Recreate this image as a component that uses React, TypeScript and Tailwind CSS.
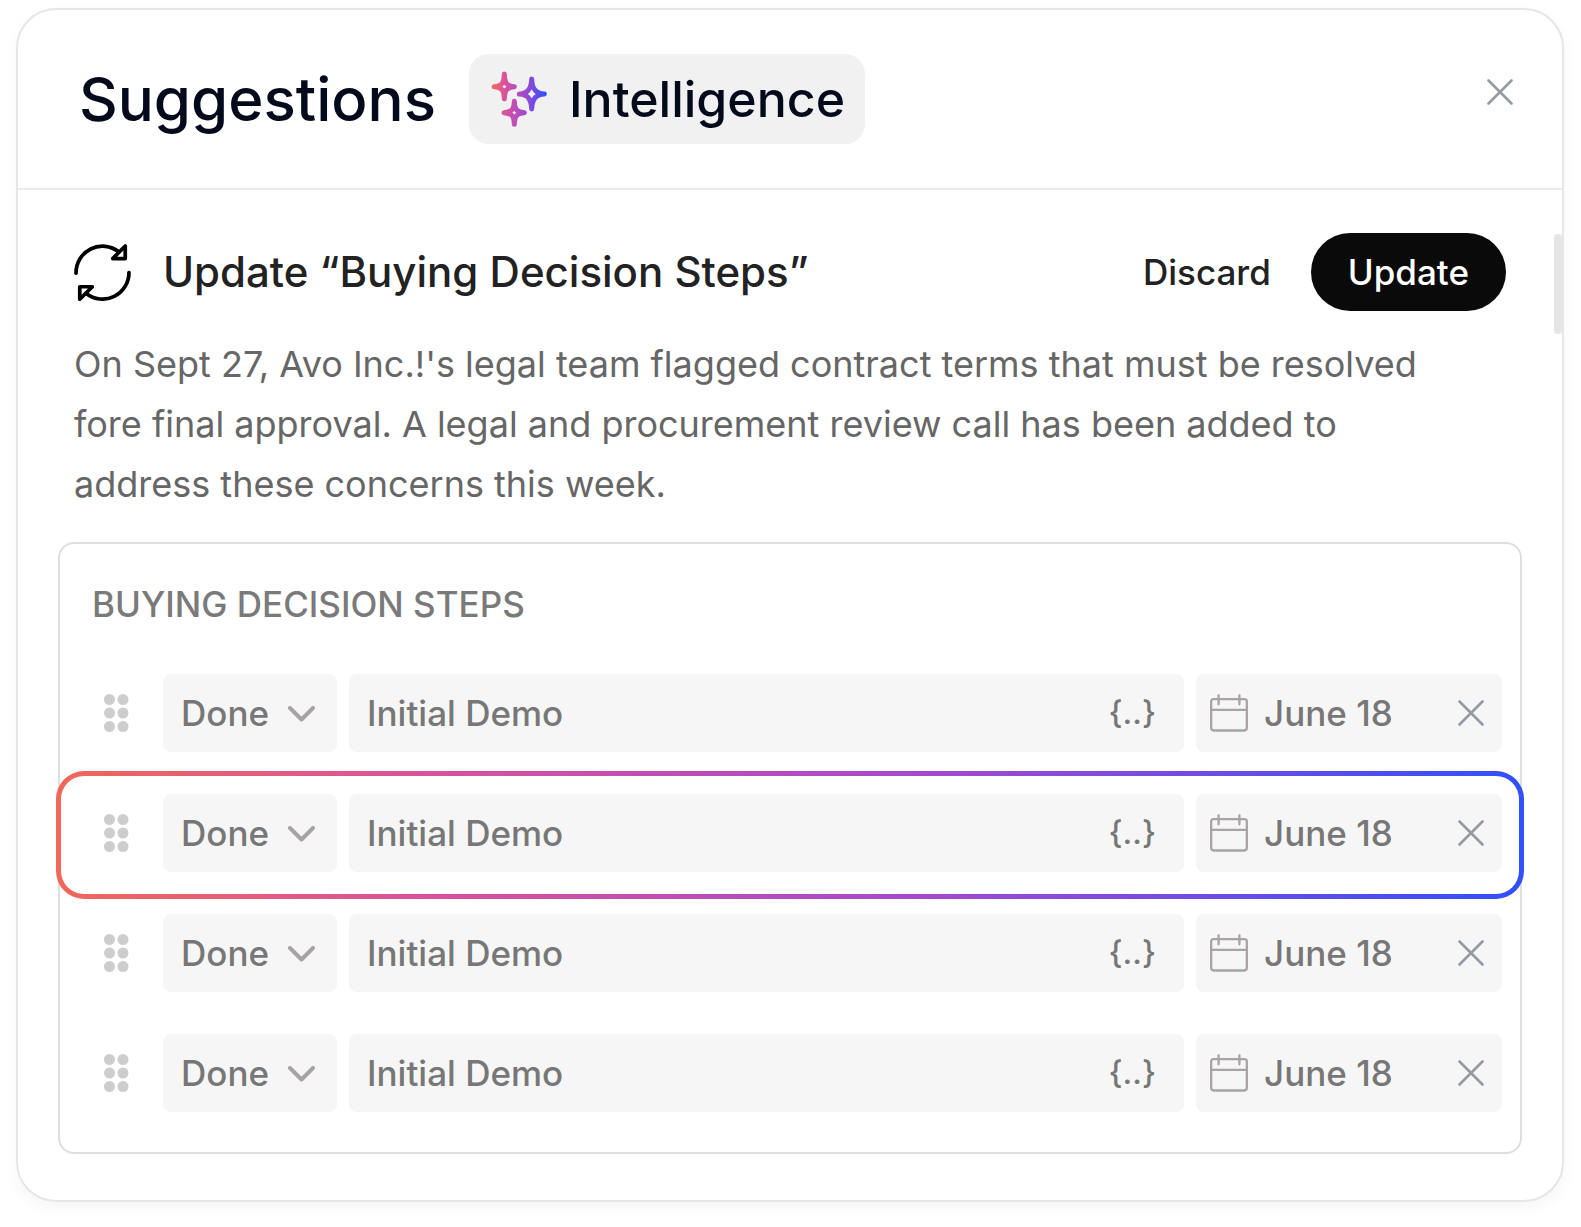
import React, { useState } from 'react';

interface Step {
  id: number;
  status: string;
  name: string;
  date: string;
  highlighted?: boolean;
}

const initialSteps: Step[] = [
  { id: 1, status: 'Done', name: 'Initial Demo', date: 'June 18' },
  { id: 2, status: 'Done', name: 'Initial Demo', date: 'June 18', highlighted: true },
  { id: 3, status: 'Done', name: 'Initial Demo', date: 'June 18' },
  { id: 4, status: 'Done', name: 'Initial Demo', date: 'June 18' },
];

const SparklesIcon = ({ className }: { className?: string }) => (
  <svg viewBox="0 0 168 168" fill="none" className={className} aria-hidden="true">
    <defs>
      <linearGradient id="sparkles" gradientUnits="userSpaceOnUse" x1="0" y1="60" x2="168" y2="60">
        <stop offset="0" stopColor="#f56b52" />
        <stop offset="0.25" stopColor="#d9529d" />
        <stop offset="0.6" stopColor="#a349cf" />
        <stop offset="1" stopColor="#2d50fb" />
      </linearGradient>
    </defs>
    <g stroke="url(#sparkles)" strokeWidth="15" strokeLinejoin="round">
      <path d="M40 9C41 36 46 45 70 47C46 49 41 58 40 84C39 58 34 49 9 47C34 45 39 36 40 9Z" />
      <path d="M122 24C123 52 133 68 160 69C133 70 123 86 122 114C121 86 111 70 85 69C111 68 121 52 122 24Z" />
      <path d="M70 91C71 114 76 123 100 125C76 127 71 136 70 160C69 136 64 127 39 125C64 123 69 114 70 91Z" />
    </g>
  </svg>
);

const RefreshIcon = ({ className }: { className?: string }) => (
  <svg viewBox="0 0 168 168" fill="none" stroke="currentColor" strokeWidth="11" strokeLinecap="round" strokeLinejoin="round" className={className} aria-hidden="true">
    <path d="M6 86A78 78 0 0 1 132 23" />
    <path d="M151 6V43H114Z" />
    <path d="M162 84A78 78 0 0 1 36 146" />
    <path d="M17 163V126H54Z" />
  </svg>
);

const CloseIcon = ({ className }: { className?: string }) => (
  <svg viewBox="0 0 26 26" fill="none" stroke="currentColor" strokeWidth="2.6" strokeLinecap="round" className={className} aria-hidden="true">
    <path d="M1.5 1.5L24.5 24.5M24.5 1.5L1.5 24.5" />
  </svg>
);

const CalendarIcon = ({ className }: { className?: string }) => (
  <svg viewBox="0 0 115 115" fill="none" stroke="currentColor" strokeWidth="7" strokeLinecap="round" className={className} aria-hidden="true">
    <rect x="3.5" y="15.5" width="108" height="95" rx="8" />
    <path d="M4 48H111" />
    <path d="M26 4V31M89 4V31" />
  </svg>
);

const ChevronIcon = ({ className }: { className?: string }) => (
  <svg viewBox="0 0 27 16" fill="none" stroke="currentColor" strokeWidth="4" strokeLinecap="round" strokeLinejoin="round" className={className} aria-hidden="true">
    <path d="M2 2L13.5 13.5L25 2" />
  </svg>
);

const GripIcon = ({ className }: { className?: string }) => (
  <svg viewBox="0 0 25 38" fill="currentColor" className={className} aria-hidden="true">
    {[5.5, 19].map((cx) =>
      [5.5, 19, 32.5].map((cy) => <circle key={`${cx}-${cy}`} cx={cx} cy={cy} r="5.5" />)
    )}
  </svg>
);

interface StepRowProps {
  step: Step;
  onChange: (step: Step) => void;
}

const StepRow: React.FC<StepRowProps> = ({ step, onChange }) => {
  return (
    <li className="relative flex items-center pl-11 pr-[18px] text-[35px] font-medium text-[#777777]">
      {step.highlighted && (
        <div className="pointer-events-none absolute -inset-x-1 -top-[23px] -bottom-[27px] rounded-[28px] border-5 border-transparent [background:linear-gradient(#fff,#fff)_padding-box,linear-gradient(90deg,#f06858,#d9529d_25%,#a349cf_60%,#3050fb)_border-box]" />
      )}
      <button type="button" aria-label="Reorder step" className="relative mr-[34px] shrink-0 text-[#cdcdcd]">
        <GripIcon className="h-[38px] w-[25px]" />
      </button>
      <div className="relative flex min-w-0 flex-1 gap-3">
        <div className="relative w-[174px] shrink-0">
          <select
            aria-label="Status"
            value={step.status}
            onChange={(e) => onChange({ ...step, status: e.target.value })}
            className="h-[78px] w-full appearance-none rounded-lg bg-[#f6f6f6] pl-[18px]"
          >
            <option value="Done">Done</option>
            <option value="Next">Next</option>
          </select>
          <ChevronIcon className="pointer-events-none absolute top-8 right-[22px] w-[27px] text-[#a8a4a4]" />
        </div>
        <div className="flex h-[78px] min-w-0 flex-1 items-center rounded-lg bg-[#f6f6f6] pl-[18px] pr-7">
          <input
            type="text"
            aria-label="Step name"
            value={step.name}
            onChange={(e) => onChange({ ...step, name: e.target.value })}
            className="min-w-0 flex-1 bg-transparent outline-none"
          />
          <button type="button" aria-label="Insert variable" className="text-[32px]">{'{..}'}</button>
        </div>
        <div className="flex h-[78px] w-[306px] shrink-0 items-center rounded-lg bg-[#f6f6f6] pl-[14px] pr-[18px]">
          <CalendarIcon className="size-[38px] shrink-0 text-[#a8a4a4]" />
          <input
            type="text"
            aria-label="Date"
            value={step.date}
            onChange={(e) => onChange({ ...step, date: e.target.value })}
            className="ml-4 min-w-0 flex-1 bg-transparent outline-none"
          />
          <button type="button" aria-label="Remove step" className="shrink-0 text-[#949aa1]">
            <CloseIcon className="size-[26px]" />
          </button>
        </div>
      </div>
    </li>
  );
};

export default function App() {
  const [steps, setSteps] = useState<Step[]>(initialSteps);

  const updateStep = (next: Step) => {
    setSteps(steps.map((step) => (step.id === next.id ? next : step)));
  };

  return (
    <div className="bg-white pt-2 pr-[17px] pb-6 pl-4 font-[Inter,sans-serif]">
      <div className="relative rounded-[40px] border-2 border-[#e6e6e6] bg-white shadow-[0_6px_16px_rgba(0,0,0,0.04)]">
        <header className="flex items-center border-b-2 border-[#ebebeb] py-11 pr-6 pl-[61px]">
          <h1 className="text-[60px] leading-[72px] font-medium text-[#020a1c]">Suggestions</h1>
          <div className="ml-[33px] flex h-[90px] items-center gap-[22px] rounded-[20px] bg-[#f1f1f1] pr-5 pl-[22px]">
            <SparklesIcon className="size-14" />
            <span className="text-[50px] leading-[60px] font-medium text-[#020a1c]">Intelligence</span>
          </div>
          <button type="button" aria-label="Close" className="ml-auto flex size-[76px] items-center justify-center self-start text-[#969ba3]">
            <CloseIcon className="size-[26px]" />
          </button>
        </header>

        {/* scroll thumb */}
        <div className="absolute top-[224px] right-0 h-[100px] w-2 rounded-full bg-[#e6e6e6]" />

        <main className="px-10 pt-[43px] pb-[46px]">
          <section className="px-4">
            <div className="flex items-center">
              <RefreshIcon className="size-[57px] shrink-0 text-black" />
              <h2 className="ml-8 text-[42px] leading-[52px] font-medium text-[#222222]">Update “Buying Decision Steps”</h2>
              <button type="button" className="ml-auto text-[35px] font-medium text-[#222222]">Discard</button>
              <button type="button" className="ml-10 h-[78px] rounded-full bg-[#0a0a0a] px-[37px] text-[35px] font-medium text-white">
                Update
              </button>
            </div>
            <p className="mt-[23px] pr-14 text-4xl leading-[60px] text-[#666666]">
              On Sept 27, Avo Inc.!'s legal team flagged contract terms that must be resolved fore final approval. A legal
              and procurement review call has been added to address these concerns this week.
            </p>
          </section>

          <section className="mt-7 rounded-2xl border-2 border-[#dedede] pt-9 pb-10">
            <h3 className="pl-8 text-[35px] leading-[48px] font-medium text-[#7a7a7a]">BUYING DECISION STEPS</h3>
            <ul className="mt-[46px] flex flex-col gap-[42px]">
              {steps.map((step) => (
                <StepRow key={step.id} step={step} onChange={updateStep} />
              ))}
            </ul>
          </section>
        </main>
      </div>
    </div>
  );
}
